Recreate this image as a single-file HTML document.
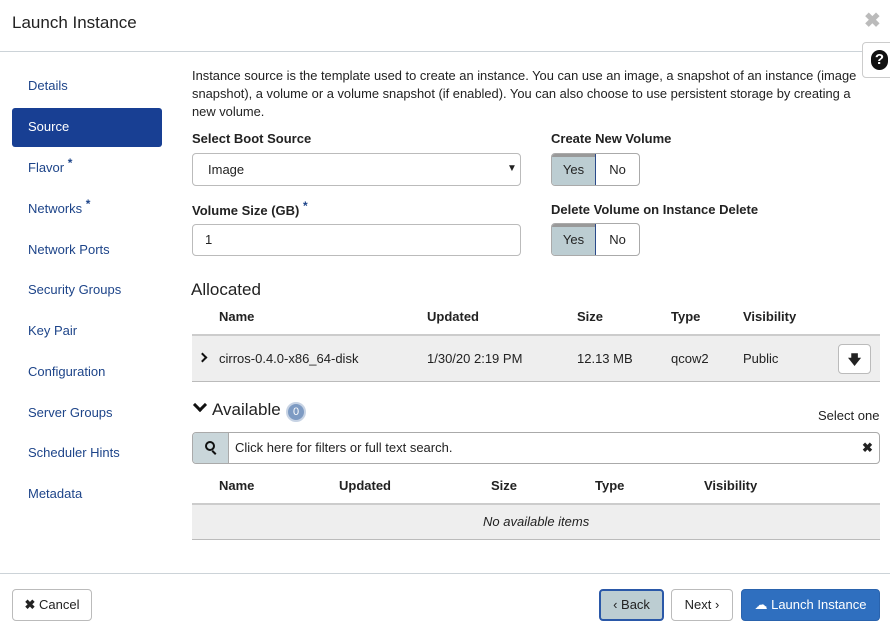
<!DOCTYPE html>
<html><head><meta charset="utf-8"><style>
*{box-sizing:border-box;margin:0;padding:0}
body{width:890px;height:636px;background:#fff;font-family:"Liberation Sans",Arial,sans-serif;font-size:13px;color:#222;position:relative;overflow:hidden}
.a{position:absolute;white-space:nowrap}
.nav{position:absolute;left:28px;color:#1d4489;font-size:13px}
.st{position:relative;top:-5px;font-size:12px;font-weight:bold;line-height:0}
.b{font-weight:bold}
.inp{position:absolute;border:1px solid #bbb;border-radius:4px;background:#fff}
.tg{position:absolute;width:89px;height:33px;border:1px solid #aaa;border-radius:4px;overflow:hidden;display:flex}
.tg div{flex:1;text-align:center;line-height:31px;font-size:13px}
.tg .y{background:#bccdd2;border-right:1px solid #2a4a8a;box-shadow:inset 0 3px 0 #999}
.btn{position:absolute;border:1px solid #bbb;border-radius:4px;text-align:center;line-height:30px;font-size:13px;background:#fff;color:#222}
</style></head><body>
<div class="a" style="left:12px;top:13px;font-size:17px;color:#222">Launch Instance</div>
<div class="a" style="left:864px;top:8px;font-size:20px;color:#bbb;font-weight:bold">✖</div>
<div class="a" style="left:0;top:51px;width:890px;height:1px;background:#ccd3d8"></div>
<div class="a" style="left:862px;top:42px;width:30px;height:36px;border:1px solid #ccc;border-radius:4px 0 0 4px;background:#fff"></div>
<div class="a" style="left:871px;top:50px;width:17px;height:20px;border-radius:9px;background:#111;color:#fff;font-weight:bold;font-size:15px;text-align:center;line-height:20px">?</div>

<div class="nav" style="top:78px">Details</div>
<div class="a" style="left:12px;top:108px;width:150px;height:39px;background:#183f93;border-radius:3px"></div>
<div class="nav" style="top:119px;color:#fff">Source</div>
<div class="nav" style="top:160px">Flavor <span class="st">*</span></div>
<div class="nav" style="top:201px">Networks <span class="st">*</span></div>
<div class="nav" style="top:242px">Network Ports</div>
<div class="nav" style="top:282px">Security Groups</div>
<div class="nav" style="top:323px">Key Pair</div>
<div class="nav" style="top:364px">Configuration</div>
<div class="nav" style="top:405px">Server Groups</div>
<div class="nav" style="top:445px">Scheduler Hints</div>
<div class="nav" style="top:486px">Metadata</div>

<div class="a" style="left:192px;top:67px;font-size:12.9px;line-height:18px">Instance source is the template used to create an instance. You can use an image, a snapshot of an instance (image<br>snapshot), a volume or a volume snapshot (if enabled). You can also choose to use persistent storage by creating a<br>new volume.</div>

<div class="a b" style="left:192px;top:131px">Select Boot Source</div>
<div class="inp" style="left:192px;top:153px;width:329px;height:33px"></div>
<div class="a" style="left:208px;top:162px">Image</div>
<div class="a" style="left:507px;top:163px;font-size:10px">▼</div>
<div class="a b" style="left:551px;top:131px">Create New Volume</div>
<div class="tg" style="left:551px;top:153px"><div class="y">Yes</div><div>No</div></div>

<div class="a b" style="left:192px;top:203px">Volume Size (GB) <span class="st" style="color:#1d4489">*</span></div>
<div class="inp" style="left:192px;top:224px;width:329px;height:32px"></div>
<div class="a" style="left:205px;top:232px">1</div>
<div class="a b" style="left:551px;top:202px">Delete Volume on Instance Delete</div>
<div class="tg" style="left:551px;top:223px"><div class="y">Yes</div><div>No</div></div>

<div class="a" style="left:191px;top:280px;font-size:17px">Allocated</div>
<div class="a b" style="left:219px;top:309px">Name</div>
<div class="a b" style="left:427px;top:309px">Updated</div>
<div class="a b" style="left:577px;top:309px">Size</div>
<div class="a b" style="left:671px;top:309px">Type</div>
<div class="a b" style="left:743px;top:309px">Visibility</div>
<div class="a" style="left:192px;top:334px;width:688px;height:48px;background:#eee;border-top:2px solid #ccc;border-bottom:1px solid #bbb"></div>
<div class="a" style="left:199px;top:354px;width:7px;height:7px;border-right:2px solid #111;border-top:2px solid #111;transform:rotate(45deg)"></div>
<div class="a" style="left:219px;top:351px">cirros-0.4.0-x86_64-disk</div>
<div class="a" style="left:427px;top:351px">1/30/20 2:19 PM</div>
<div class="a" style="left:577px;top:351px">12.13 MB</div>
<div class="a" style="left:671px;top:351px">qcow2</div>
<div class="a" style="left:743px;top:351px">Public</div>
<div class="btn" style="left:838px;top:344px;width:33px;height:30px;font-weight:bold">🡇</div>

<div class="a" style="left:195px;top:400px;width:10px;height:10px;border-right:3px solid #111;border-bottom:3px solid #111;transform:rotate(45deg)"></div>
<div class="a" style="left:212px;top:400px;font-size:17px">Available</div>
<div class="a" style="left:286px;top:402px;width:20px;height:20px;border-radius:10px;background:#7e9bc3;border:2px solid #c7d3e4;color:#fff;font-size:11px;text-align:center;line-height:16px">0</div>
<div class="a" style="left:818px;top:408px">Select one</div>
<div class="a" style="left:192px;top:432px;width:688px;height:32px;border:1px solid #aaa;border-radius:4px"></div>
<div class="a" style="left:193px;top:433px;width:36px;height:30px;background:#c9d6da;border-right:1px solid #aaa;border-radius:3px 0 0 3px"></div>
<div class="a" style="left:205px;top:441px;width:10px;height:10px;border:2px solid #111;border-radius:6px"></div>
<div class="a" style="left:213px;top:450px;width:2px;height:5px;background:#111;transform:rotate(-45deg)"></div>
<div class="a" style="left:235px;top:440px">Click here for filters or full text search.</div>
<div class="a b" style="left:862px;top:440px;font-size:13px">✖</div>

<div class="a b" style="left:219px;top:478px">Name</div>
<div class="a b" style="left:339px;top:478px">Updated</div>
<div class="a b" style="left:491px;top:478px">Size</div>
<div class="a b" style="left:595px;top:478px">Type</div>
<div class="a b" style="left:704px;top:478px">Visibility</div>
<div class="a" style="left:192px;top:503px;width:688px;height:37px;background:#eee;border-top:2px solid #ccc;border-bottom:1px solid #bbb"></div>
<div class="a" style="left:483px;top:514px;font-style:italic">No available items</div>

<div class="a" style="left:0;top:573px;width:890px;height:1px;background:#ccd3d8"></div>
<div class="btn" style="left:12px;top:589px;width:80px;height:32px"><b>✖</b> Cancel</div>
<div class="btn" style="left:599px;top:589px;width:65px;height:32px;background:#bccdd2;border:2px solid #2a58a8;line-height:28px">‹ Back</div>
<div class="btn" style="left:671px;top:589px;width:62px;height:32px">Next ›</div>
<div class="btn" style="left:741px;top:589px;width:139px;height:32px;background:#2f6fbf;border-color:#2a63ad;color:#fff">☁ Launch Instance</div>
</body></html>
